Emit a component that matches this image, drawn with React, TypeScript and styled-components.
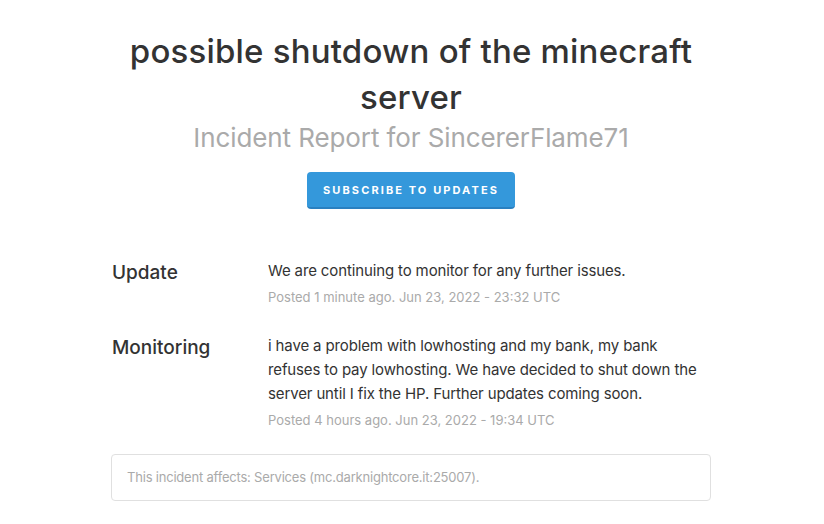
import React from 'react';
import styled, {createGlobalStyle} from 'styled-components';

const GlobalStyle = createGlobalStyle`
  body {
    margin: 0;
    background: #fff;
    font-family: Inter, "Noto Sans", sans-serif;
    color: #333;
  }
`

const Page = styled.div`
  width: 600px;
  margin: 0 auto;
  padding-top: 28px;
  position: relative;
  left: -1px;
`

const Header = styled.div`
  display: flex;
  flex-direction: column;
  align-items: center;
  text-align: center;
`

const Title = styled.h1`
  margin: 0;
  font-size: 33px;
  font-weight: 500;
  letter-spacing: 0.2px;
  line-height: 46px;
  color: #333;
`

const Subtitle = styled.div`
  font-size: 26px;
  line-height: 32px;
  letter-spacing: -0.1px;
  color: #aaa;
  margin-top: 2px;
`

const SubscribeButton = styled.button`
  margin-top: 18px;
  width: 208px;
  height: 37px;
  border: none;
  border-bottom: 2px solid #2a80c0;
  border-radius: 4px;
  background: #3498db;
  color: #fff;
  font-family: inherit;
  font-size: 11px;
  font-weight: 700;
  letter-spacing: 2.1px;
  text-transform: uppercase;
`

const Updates = styled.div`
  margin-top: 49px;
  display: flex;
  flex-direction: column;
  gap: 26px;
`

const UpdateRow = styled.div`
  display: grid;
  grid-template-columns: 156px 1fr;
  padding-left: 1px;
`

const Status = styled.div`
  font-size: 19px;
  font-weight: 500;
  line-height: 30px;
  color: #333;
`

const Body = styled.div`
  font-size: 15px;
  line-height: 24px;
  letter-spacing: -0.13px;
  color: #333;
  padding-top: 1px;
`

const Meta = styled.div`
  font-size: 13px;
  line-height: 20px;
  letter-spacing: 0;
  color: #aaa;
  margin-top: 4px;
`

const Affects = styled.div`
  margin-top: 24px;
  border: 1px solid #e0e0e0;
  border-radius: 4px;
  padding: 12px 15px 13px;
  font-size: 13px;
  line-height: 20px;
  letter-spacing: -0.2px;
  color: #aaa;
`

function App() {
    return (
        <>
            <GlobalStyle/>
            <Page>
                <Header>
                    <Title>possible shutdown of the minecraft server</Title>
                    <Subtitle>Incident Report for SincererFlame71</Subtitle>
                    <SubscribeButton>Subscribe to Updates</SubscribeButton>
                </Header>
                <Updates>
                    <UpdateRow>
                        <Status>Update</Status>
                        <Body>
                            We are continuing to monitor for any further issues.
                            <Meta>Posted 1 minute ago. Jun 23, 2022 - 23:32 UTC</Meta>
                        </Body>
                    </UpdateRow>
                    <UpdateRow>
                        <Status>Monitoring</Status>
                        <Body>
                            i have a problem with lowhosting and my bank, my bank refuses to pay lowhosting. We have decided to shut down the server until I fix the HP. Further updates coming soon.
                            <Meta>Posted 4 hours ago. Jun 23, 2022 - 19:34 UTC</Meta>
                        </Body>
                    </UpdateRow>
                </Updates>
                <Affects>This incident affects: Services (mc.darknightcore.it:25007).</Affects>
            </Page>
        </>
    );
}

export default App;
